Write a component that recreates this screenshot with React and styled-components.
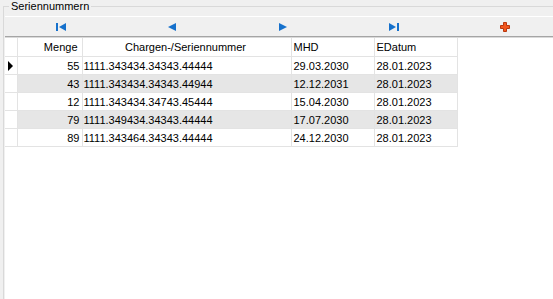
import React from 'react';
import styled, { createGlobalStyle } from 'styled-components';

const rows = [
    { menge: 55, nr: '1111.343434.34343.44444', mhd: '29.03.2030', edatum: '28.01.2023' },
    { menge: 43, nr: '1111.343434.34343.44944', mhd: '12.12.2031', edatum: '28.01.2023' },
    { menge: 12, nr: '1111.343434.34743.45444', mhd: '15.04.2030', edatum: '28.01.2023' },
    { menge: 79, nr: '1111.349434.34343.44444', mhd: '17.07.2030', edatum: '28.01.2023' },
    { menge: 89, nr: '1111.343464.34343.44444', mhd: '24.12.2030', edatum: '28.01.2023' },
];

function NavIcon({ kind }) {
    const blue = '#1671cc';
    if (kind === 'first') {
        return (
            <svg width="10" height="8" viewBox="0 0 10 8">
                <rect x="0" y="0" width="2" height="8" fill={blue} />
                <polygon points="10,0 10,8 3,4" fill={blue} />
            </svg>
        );
    }
    if (kind === 'prev') {
        return (
            <svg width="8" height="8" viewBox="0 0 8 8">
                <polygon points="8,0 8,8 0,4" fill={blue} />
            </svg>
        );
    }
    if (kind === 'next') {
        return (
            <svg width="8" height="8" viewBox="0 0 8 8">
                <polygon points="0,0 0,8 8,4" fill={blue} />
            </svg>
        );
    }
    if (kind === 'last') {
        return (
            <svg width="10" height="8" viewBox="0 0 10 8">
                <polygon points="0,0 0,8 7,4" fill={blue} />
                <rect x="8" y="0" width="2" height="8" fill={blue} />
            </svg>
        );
    }
    return (
        <svg width="10" height="10" viewBox="0 0 10 10">
            <path d="M3.5 0.5h3v3h3v3h-3v3h-3v-3h-3v-3h3z" fill="#f2561d" stroke="#b8370e" strokeWidth="1" />
        </svg>
    );
}

export default function App() {
    return (
        <>
            <GlobalStyle />
            <Page>
                <GroupBox>
                    <Legend>Seriennummern</Legend>
                    <Toolbar>
                        {['first', 'prev', 'next', 'last', 'add'].map((k) => (
                            <ToolButton key={k}>
                                <NavIcon kind={k} />
                            </ToolButton>
                        ))}
                    </Toolbar>
                    <GridArea>
                        <Table>
                            <colgroup>
                                <col style={{ width: 12 }} />
                                <col style={{ width: 65 }} />
                                <col style={{ width: 209 }} />
                                <col style={{ width: 83 }} />
                                <col style={{ width: 83 }} />
                            </colgroup>
                            <thead>
                                <tr>
                                    <HeadCell />
                                    <HeadCell $align="right">Menge</HeadCell>
                                    <HeadCell $align="center">Chargen-/Seriennummer</HeadCell>
                                    <HeadCell>MHD</HeadCell>
                                    <HeadCell>EDatum</HeadCell>
                                </tr>
                            </thead>
                            <tbody>
                                {rows.map((r, i) => (
                                    <Row key={i} $alt={i % 2 === 1}>
                                        <Indicator>{i === 0 && <Arrow />}</Indicator>
                                        <Cell $align="right">{r.menge}</Cell>
                                        <Cell $pad="1px">{r.nr}</Cell>
                                        <Cell>{r.mhd}</Cell>
                                        <Cell>{r.edatum}</Cell>
                                    </Row>
                                ))}
                            </tbody>
                        </Table>
                    </GridArea>
                </GroupBox>
            </Page>
        </>
    );
}

const GlobalStyle = createGlobalStyle`
    html, body {
        margin: 0;
        padding: 0;
        background: #f0f0f0;
    }
    body {
        font-family: "Liberation Sans", Arial, sans-serif;
        font-size: 11px;
        color: #000;
    }
`;

const Page = styled.div`
    width: 553px;
    height: 299px;
    overflow: hidden;
    display: flex;
    flex-direction: column;
`;

const GroupBox = styled.fieldset`
    flex: 1;
    margin: 0 0 0 3px;
    padding: 3px 0 0 1px;
    border: 1px solid #d9d9d9;
    border-right: none;
    border-bottom: none;
    display: flex;
    flex-direction: column;
    min-height: 0;
`;

const Legend = styled.legend`
    margin-left: 4px;
    padding: 0 2px;
    line-height: 13px;
    color: #000;
`;

const Toolbar = styled.div`
    display: flex;
    height: 19px;
    border-top: 1px solid #ffffff;
    border-bottom: 1px solid #a5a5a5;
    box-shadow: 0 1px 0 #dadada;
    background: #f0f0f0;
`;

const ToolButton = styled.div`
    flex: 0 0 111px;
    display: flex;
    align-items: center;
    justify-content: center;
`;

const GridArea = styled.div`
    flex: 1;
    background: #ffffff;
    margin-top: 1px;
`;

const Table = styled.table`
    border-collapse: collapse;
    table-layout: fixed;
    width: 452px;
`;

const HeadCell = styled.th`
    height: 18px;
    padding: 0 4px 0 2px;
    font-weight: normal;
    text-align: ${(p) => p.$align || 'left'};
    border-right: 1px solid #e3e3e3;
    border-bottom: 1px solid #e3e3e3;
    white-space: nowrap;
    overflow: hidden;
`;

const Row = styled.tr`
    background: ${(p) => (p.$alt ? '#e6e6e6' : '#ffffff')};
`;

const Cell = styled.td`
    height: 17px;
    padding: 0 ${(p) => p.$pad || '2px'} 0 ${(p) => p.$pad || '2px'};
    text-align: ${(p) => p.$align || 'left'};
    border-right: 1px solid #e3e3e3;
    border-bottom: 1px solid #e3e3e3;
    white-space: nowrap;
    overflow: hidden;
`;

const Indicator = styled.td`
    height: 17px;
    padding: 0;
    background: #ffffff;
    border-right: 1px solid #e3e3e3;
    border-bottom: 1px solid #e3e3e3;
    position: relative;
`;

const Arrow = styled.span`
    display: block;
    width: 0;
    height: 0;
    margin-left: 3px;
    border-top: 5px solid transparent;
    border-bottom: 5px solid transparent;
    border-left: 5px solid #000;
`;
